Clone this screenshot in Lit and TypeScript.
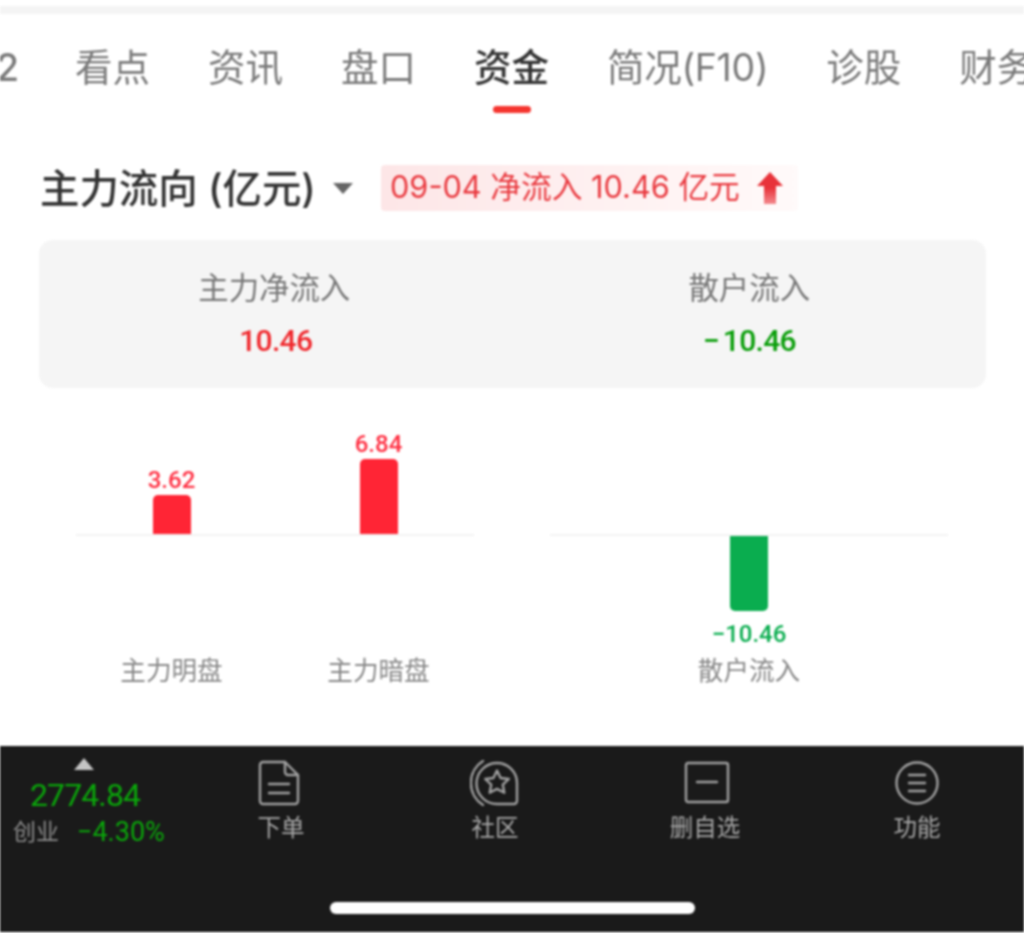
import { LitElement, html, css } from "lit";
import { customElement } from "lit/decorators.js";

@customElement("app-root")
export class AppRoot extends LitElement {
  static styles = css`
    :host { display: block; width: 1024px; height: 933px; overflow: hidden; background: #fff;
      font-family: "Inter", "Noto Sans CJK SC", sans-serif; }
    .page { display: flex; flex-direction: column; height: 933px; filter: blur(0.8px); }
    .band { height: 8px; margin-top: 6px; background: #f4f4f4; flex: none; }
    .tabs { display: flex; gap: 58px; padding-top: 32px; white-space: nowrap; flex: none; width: 1200px; }
    .tab { display: flex; flex-direction: column; align-items: center; font-size: 37.5px; line-height: 44px; color: #7a7a7a; font-weight: 400; }
    .tab.active { color: #333; font-weight: 500; }
    .tab.tight { letter-spacing: -0.3px; }
    .tab i { display: block; width: 38px; height: 7px; margin-top: 16px; border-radius: 4px; background: transparent; }
    .tab.active i { background: #f5352f; }
    .clip { display: block; width: 19px; margin-right: -2px; direction: rtl; overflow: hidden; flex: none; font-weight: 500; }
    .head { display: flex; align-items: center; margin: 52px 0 0 40px; height: 46px; flex: none; }
    .title { font-size: 39.4px; line-height: 46px; margin-top: 2px; font-weight: 500; color: #333; width: 275px; white-space: nowrap; }
    .caret { width: 0; height: 0; border: 10px solid transparent; border-top: 11px solid #666; border-bottom: 0; margin: 0 28px 0 18px; }
    .badge { display: flex; align-items: center; gap: 17px; box-sizing: border-box; width: 417px; height: 46px; padding-left: 9px;
      background: linear-gradient(90deg, #fde6e7, #fff5f5 75%, #fffafa); border-radius: 4px; color: #e9393f; font-size: 30.7px; white-space: nowrap; font-weight: 400; }
    .badge span { line-height: 42px; margin-top: -3px; }
    .panel { display: grid; grid-template-columns: 1fr 1fr; margin: 29px 38px 0 39px; height: 148px; background: #f5f5f5; border-radius: 14px; flex: none; }
    .cell { display: flex; flex-direction: column; align-items: center; padding-top: 28px; }
    .cell .l { font-size: 30.4px; line-height: 40px; color: #777; font-weight: 400; }
    .cell:first-child .l { margin-right: 3px; }
    .cell .v { font-family: "Roboto", sans-serif; font-size: 30px; letter-spacing: -0.7px; line-height: 40px; margin-top: 13px; font-weight: 500; }
    .minus { margin-right: 4px; }
    .red { color: #f0282d; } .green { color: #0a9e0a; }
    .chart { display: flex; gap: 76px; margin: 36px 0 0 76px; flex: none; }
    .group { width: 398px; }
    .up, .down, .labels { display: grid; justify-content: center; }
    .two { grid-template-columns: 207px 207px; }
    .one { grid-template-columns: 207px; }
    .up { height: 110px; border-bottom: 2px solid #f3f3f3; align-items: end; }
    .down { height: 117px; align-items: start; }
    .col { display: flex; flex-direction: column; align-items: center; }
    .val { font-family: "Roboto", sans-serif; font-size: 24px; line-height: 30px; font-weight: 500; }
    .bar { width: 38px; }
    .bar.r { background: #ff2535; border-radius: 5px 5px 0 0; }
    .bar.g { background: #0aad4f; border-radius: 0 0 5px 5px; margin-bottom: 8px; }
    .val.r { color: #ff2f42; } .val.g { color: #0aad4f; }
    .labels div { text-align: center; font-size: 25.6px; line-height: 36px; color: #888; font-weight: 400; }
    .foot { margin-top: auto; height: 186px; margin-bottom: 1px; background: #1a1a1a; flex: none; display: flex; flex-direction: column; }
    .row { height: 156px; display: grid; grid-template-columns: 175px 212px 216px 204px 217px; flex: none; }
    .ticker { padding-top: 12px; white-space: nowrap; }
    .tri { width: 0; height: 0; margin-left: 74px; border: 10px solid transparent; border-top: 0; border-bottom: 12px solid #c4c4c4; }
    .num { margin: 7px 0 0 30px; font-family: "Roboto", sans-serif; font-size: 32px; letter-spacing: -0.9px; line-height: 36px; color: #0aa50a; }
    .sub { display: flex; align-items: center; gap: 18px; margin: 1px 0 0 13px; line-height: 36px; }
    .sub span { font-size: 23px; color: #8c8c8c; font-weight: 400; }
    .sub b { font-family: "Roboto", sans-serif; font-size: 27px; font-weight: 400; color: #0aa50a; }
    .item { display: flex; flex-direction: column; align-items: center; padding-top: 14px; }
    .item svg { display: block; height: 46px; }
    .doc { margin-right: 4px; }
    .del { margin-left: 4px; }
    .item .t { font-size: 23.5px; line-height: 30px; margin-top: 7px; color: #a8a8a8; font-weight: 400; white-space: nowrap; }
    .item.last { padding-left: 3px; }
    .home { width: 365px; height: 12px; margin-left: 330px; background: #fff; border-radius: 6px; flex: none; }
    .ic { fill: none; stroke: #a0a0a0; stroke-width: 2.4; stroke-linejoin: round; stroke-linecap: round; }
  `;

  tabs = ["看点", "资讯", "盘口", "资金", "简况(F10)", "诊股", "财务"];

  render() {
    return html`<div class="page">
      <div class="band"></div>
      <div class="tabs">
        <div class="tab clip">2</div>
        ${this.tabs.map(t => html`<div class="tab ${t === "资金" ? "active" : ""} ${t.includes("F10") ? "tight" : ""}">${t}<i></i></div>`)}
      </div>
      <div class="head">
        <div class="title">主力流向 (亿元)</div>
        <div class="caret"></div>
        <div class="badge">
          <span>09-04 净流入 10.46 亿元</span>
          <svg width="26" height="32" viewBox="0 0 26 32">
            <defs><linearGradient id="u" x1="0" y1="0" x2="0" y2="1"><stop offset="0" stop-color="#e8333a"/><stop offset="0.5" stop-color="#e8333a"/><stop offset="1" stop-color="#f48a8e"/></linearGradient></defs>
            <path d="M13 0 L26 14 H19 V32 H7 V14 H0 Z" fill="url(#u)"/>
          </svg>
        </div>
      </div>
      <div class="panel">
        <div class="cell"><div class="l">主力净流入</div><div class="v red">10.46</div></div>
        <div class="cell"><div class="l">散户流入</div><div class="v green"><span class="minus">−</span>10.46</div></div>
      </div>
      <div class="chart">
        <div class="group">
          <div class="up two">
            <div class="col"><div class="val r">3.62</div><div class="bar r" style="height:39px"></div></div>
            <div class="col"><div class="val r">6.84</div><div class="bar r" style="height:75px"></div></div>
          </div>
          <div class="down two"></div>
          <div class="labels two"><div>主力明盘</div><div>主力暗盘</div></div>
        </div>
        <div class="group">
          <div class="up one"></div>
          <div class="down one"><div class="col"><div class="bar g" style="height:75px"></div><div class="val g">−10.46</div></div></div>
          <div class="labels one"><div>散户流入</div></div>
        </div>
      </div>
      <div class="foot">
        <div class="row">
          <div class="ticker">
            <div class="tri"></div>
            <div class="num">2774.84</div>
            <div class="sub"><span>创业</span><b>−4.30%</b></div>
          </div>
          <div class="item">
            <svg class="ic doc" width="42" height="46" viewBox="0 0 42 46">
              <path d="M5 2 H27 L40 15 V41 a3 3 0 0 1 -3 3 H5 a3 3 0 0 1 -3 -3 V5 a3 3 0 0 1 3 -3 Z"/>
              <path d="M27 2 V12 a3 3 0 0 0 3 3 H40"/>
              <path d="M11 24 H31 M11 33 H31"/>
            </svg>
            <div class="t">下单</div>
          </div>
          <div class="item">
            <svg class="ic" width="50" height="46" viewBox="0 0 50 46">
              <path d="M13 1 A26 26 0 0 0 13 45"/>
              <path d="M27 3 a20 20 0 0 1 20 20 v18 a3 3 0 0 1 -3 3 H27 a20.5 20.5 0 0 1 0 -41 Z"/>
              <path d="M27 10.5 L30.6 18 L38.8 19 L32.8 24.7 L34.3 32.8 L27 28.9 L19.7 32.8 L21.2 24.7 L15.2 19 L23.4 18 Z"/>
            </svg>
            <div class="t">社区</div>
          </div>
          <div class="item">
            <svg class="ic del" width="46" height="46" viewBox="0 0 46 46">
              <rect x="2" y="3" width="42" height="39" rx="2"/>
              <path d="M13 22 H33"/>
            </svg>
            <div class="t">删自选</div>
          </div>
          <div class="item last">
            <svg class="ic" width="46" height="46" viewBox="0 0 46 46">
              <circle cx="23" cy="23" r="20.5"/>
              <path d="M15 15 H31 M15 23 H31 M15 31 H31"/>
            </svg>
            <div class="t">功能</div>
          </div>
        </div>
        <div class="home"></div>
      </div>
    </div>`;
  }
}
